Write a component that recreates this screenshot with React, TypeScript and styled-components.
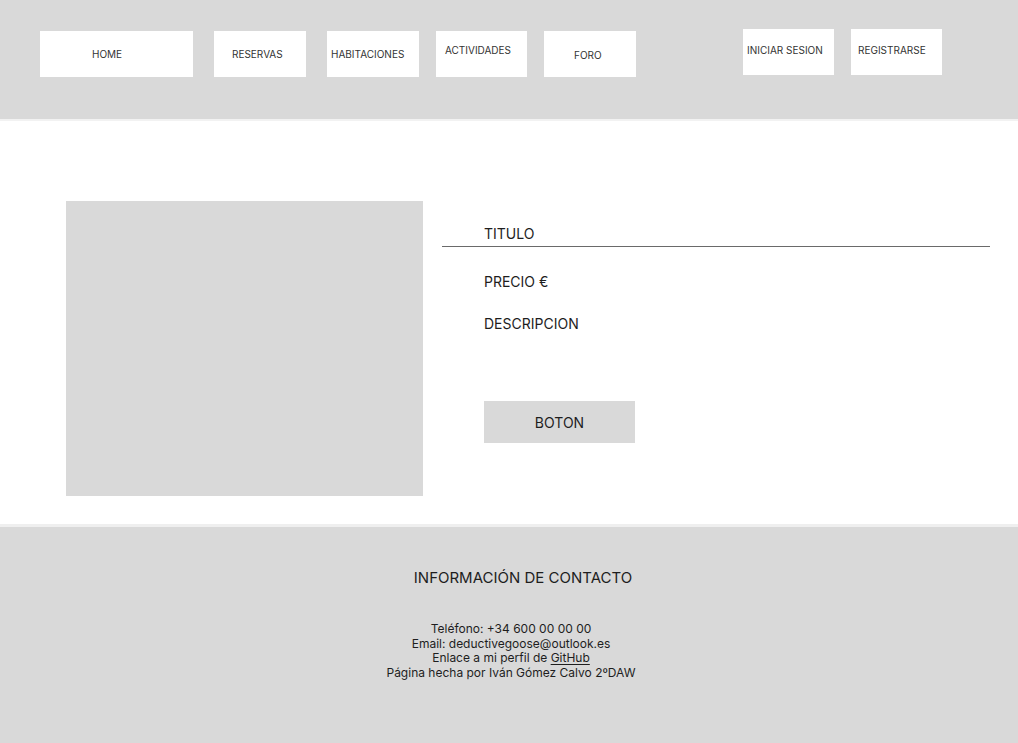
import styled, { createGlobalStyle } from "styled-components";

const GlobalStyle = createGlobalStyle`
  html, body {
    margin: 0;
    padding: 0;
    background: #ffffff;
    font-family: Inter, "Liberation Sans", sans-serif;
    color: #1e1e1e;
  }
`;

interface NavItem {
  label: string;
  width: number;
  gap: number;
  padLeft: number;
  padTop: number;
  top: number;
}

const navItems: NavItem[] = [
  { label: "HOME", width: 153, gap: 0, padLeft: 52, padTop: 17, top: 31 },
  { label: "RESERVAS", width: 92, gap: 21, padLeft: 18, padTop: 17, top: 31 },
  { label: "HABITACIONES", width: 92, gap: 21, padLeft: 4, padTop: 17, top: 31 },
  { label: "ACTIVIDADES", width: 91, gap: 17, padLeft: 9, padTop: 13, top: 31 },
  { label: "FORO", width: 92, gap: 17, padLeft: 30, padTop: 18, top: 31 },
  { label: "INICIAR SESION", width: 91, gap: 107, padLeft: 4, padTop: 15, top: 29 },
  { label: "REGISTRARSE", width: 91, gap: 17, padLeft: 7, padTop: 15, top: 29 },
];

export default function App() {
  return (
    <Page>
      <GlobalStyle />
      <Header>
        <Nav>
          {navItems.map((item) => (
            <NavButton
              key={item.label}
              $width={item.width}
              $gap={item.gap}
              $padLeft={item.padLeft}
              $padTop={item.padTop}
              $top={item.top}
            >
              {item.label}
            </NavButton>
          ))}
        </Nav>
      </Header>

      <Main>
        <ImagePlaceholder />
        <Details>
          <Title>TITULO</Title>
          <Field $space={26}>PRECIO €</Field>
          <Field $space={25}>DESCRIPCION</Field>
          <ActionButton>BOTON</ActionButton>
        </Details>
      </Main>

      <Footer>
        <FooterTitle>INFORMACIÓN DE CONTACTO</FooterTitle>
        <FooterLines>
          <div>Teléfono: +34 600 00 00 00</div>
          <div>Email: deductivegoose@outlook.es</div>
          <div>
            Enlace a mi perfil de <FooterLink>GitHub</FooterLink>
          </div>
          <div>Página hecha por Iván Gómez Calvo 2ºDAW</div>
        </FooterLines>
      </Footer>
    </Page>
  );
}

const Page = styled.div`
  display: flex;
  flex-direction: column;
  width: 1018px;
  min-height: 743px;
`;

const Header = styled.header`
  height: 119px;
  background: #d9d9d9;
  border-bottom: 2px solid #f2f2f2;
`;

const Nav = styled.nav`
  display: flex;
  align-items: flex-start;
  padding-left: 40px;
`;

const NavButton = styled.div<{
  $width: number;
  $gap: number;
  $padLeft: number;
  $padTop: number;
  $top: number;
}>`
  box-sizing: border-box;
  width: ${(p) => p.$width}px;
  height: 46px;
  margin-top: ${(p) => p.$top}px;
  margin-left: ${(p) => p.$gap}px;
  padding-left: ${(p) => p.$padLeft}px;
  padding-top: ${(p) => p.$padTop}px;
  background: #ffffff;
  font-size: 10px;
  line-height: 12px;
  color: #333333;
  white-space: nowrap;
`;

const Main = styled.main`
  display: flex;
  gap: 19px;
  padding: 80px 28px 28px 66px;
`;

const ImagePlaceholder = styled.div`
  width: 357px;
  height: 295px;
  background: #d9d9d9;
  flex-shrink: 0;
`;

const Details = styled.section`
  flex: 1;
  display: flex;
  flex-direction: column;
  align-items: flex-start;
  padding-top: 24px;
`;

const Title = styled.div`
  align-self: stretch;
  padding: 0 0 4px 42px;
  border-bottom: 1px solid #6a6a6a;
  font-size: 14px;
  line-height: 17px;
`;

const Field = styled.div<{ $space: number }>`
  margin-top: ${(p) => p.$space}px;
  padding-left: 42px;
  font-size: 14px;
  line-height: 17px;
`;

const ActionButton = styled.div`
  margin: 69px 0 0 42px;
  width: 151px;
  height: 42px;
  display: flex;
  align-items: center;
  justify-content: center;
  background: #d9d9d9;
  font-size: 14px;
`;

const Footer = styled.footer`
  flex: 1;
  display: flex;
  flex-direction: column;
  align-items: center;
  padding-top: 42px;
  background: #d9d9d9;
  border-top: 3px solid #efefef;
`;

const FooterTitle = styled.div`
  padding-left: 28px;
  font-size: 15px;
  line-height: 18px;
`;

const FooterLines = styled.div`
  margin-top: 35px;
  font-size: 12px;
  line-height: 14.7px;
  text-align: center;
  margin-left: 4px;
`;

const FooterLink = styled.span`
  text-decoration: underline;
  text-underline-offset: 2px;
`;
